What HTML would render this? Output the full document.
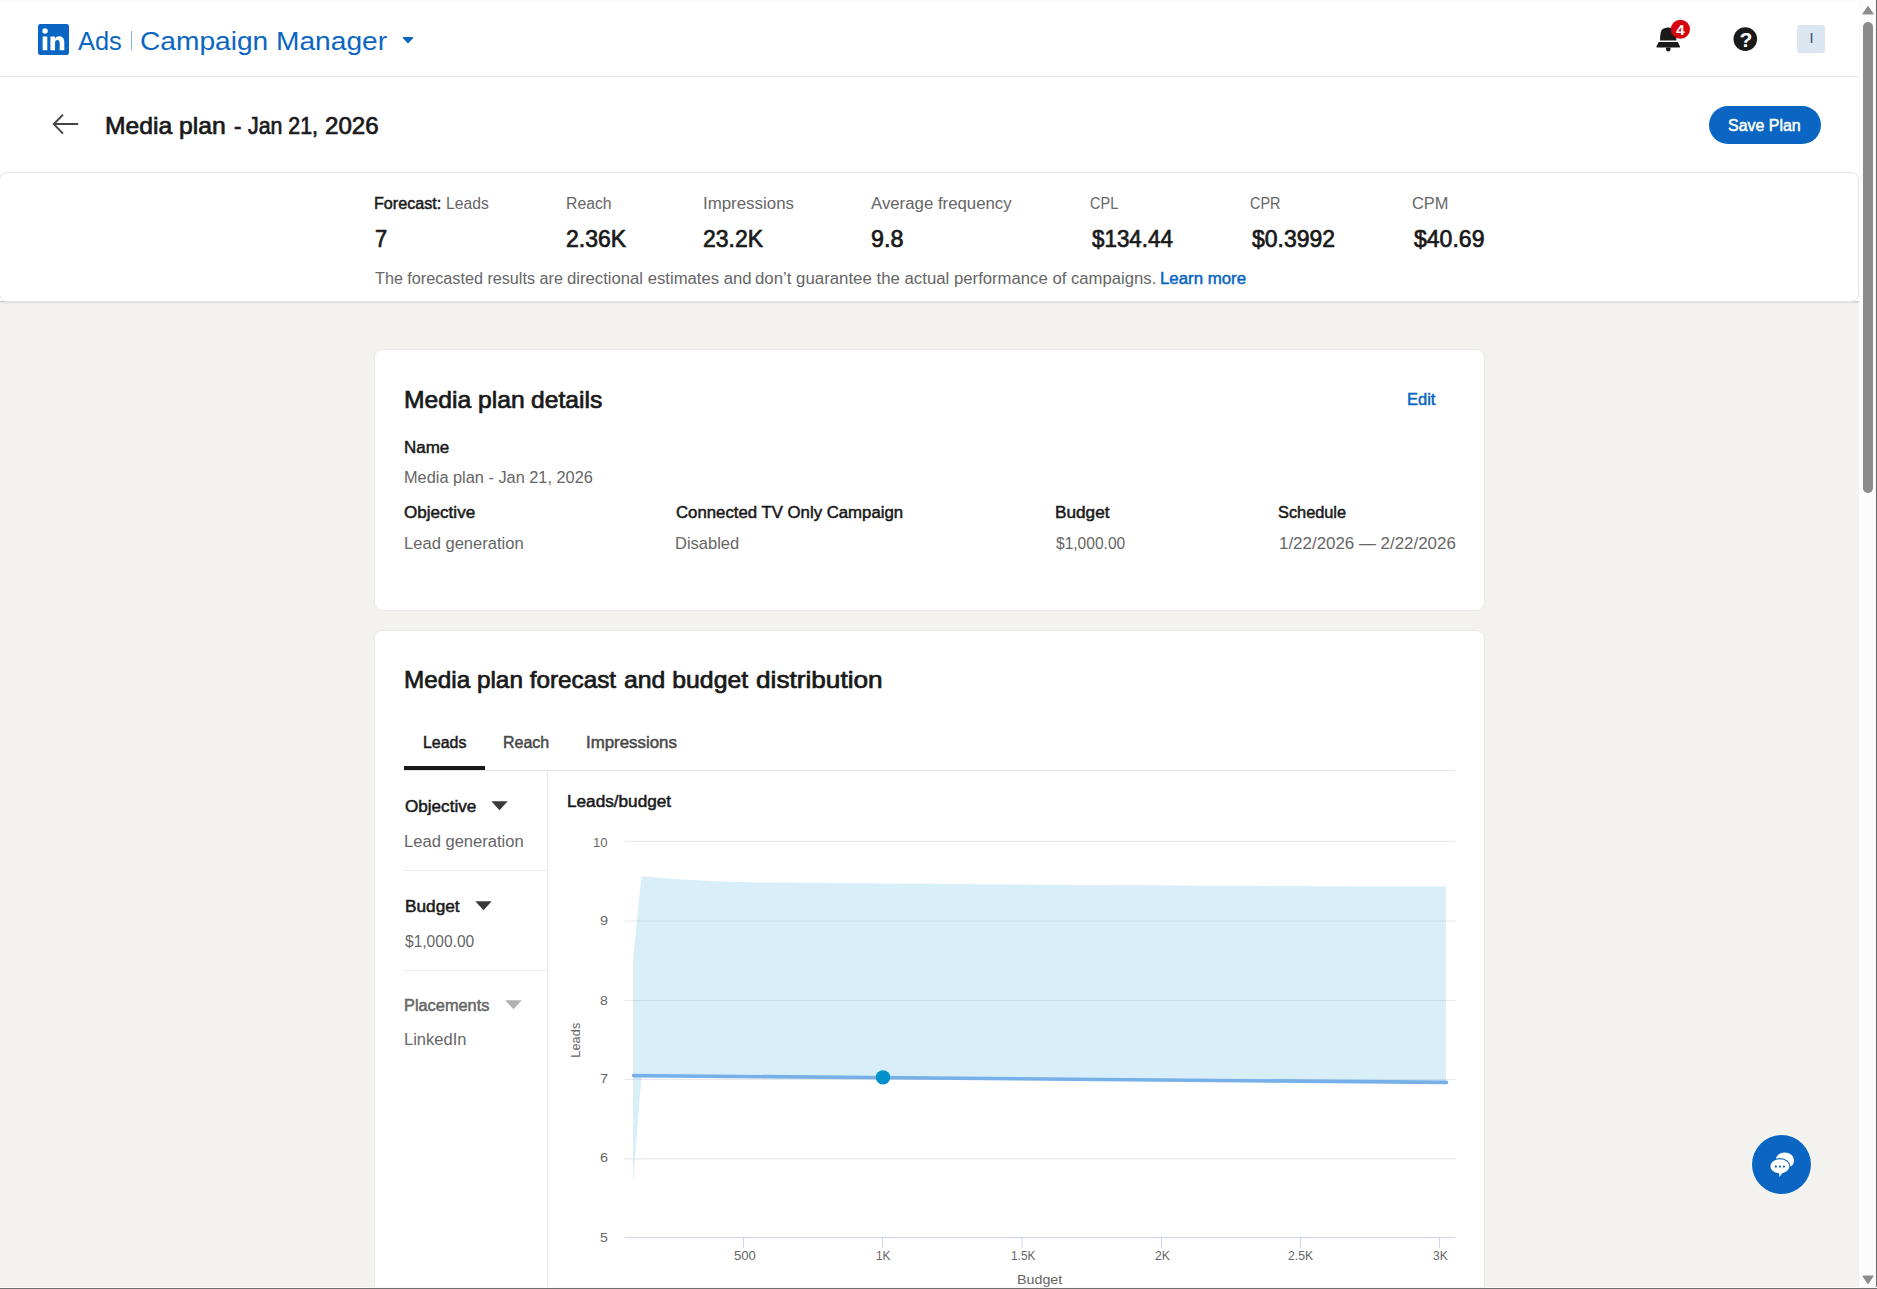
<!DOCTYPE html>
<html lang="en">
<head>
<meta charset="utf-8">
<title>Campaign Manager - Media plan</title>
<style>
html,body{margin:0;padding:0}
body{width:1877px;height:1289px;overflow:hidden;position:relative;background:#f3f2ef;font-family:"Liberation Sans",sans-serif;}
.abs{position:absolute}
.t{position:absolute;display:block;white-space:pre;line-height:1;transform-origin:0 0;margin:0;padding:0;font-weight:400;font-style:normal}
.g{display:contents;margin:0;padding:0;font-size:16px;font-weight:400}
#page{position:absolute;left:0;top:0;width:1859px;height:1289px;overflow:hidden;background:#f3f2ef}
#topnav{position:absolute;left:0;top:0;width:1859px;height:76px;background:#fff;border-bottom:1px solid #e8e8e8}
#titlebar{position:absolute;left:0;top:77px;width:1859px;height:95px;background:#fff}
#forecastwrap{position:absolute;left:0;top:172px;width:1859px;height:129px;background:#fff;border-bottom:1px solid #cfcfcd;box-shadow:0 1px 1px rgba(0,0,0,.07)}
#forecast{position:absolute;left:-1px;top:0;width:1858px;height:128px;background:#fff;border:1px solid #e6e6e6;border-radius:8px}
.card{position:absolute;background:#fff;border-radius:8px;box-shadow:0 0 0 1px rgba(0,0,0,.035)}
#card1{left:375px;top:350px;width:1109px;height:260px}
#card2{left:375px;top:631px;width:1109px;height:700px}
#save{position:absolute;left:1709px;top:106px;width:112px;height:38px;border-radius:19px;background:#0a66c2}
#avatar{position:absolute;left:1797px;top:25px;width:28px;height:28px;border-radius:3px;background:#dce6f1}
#sb{position:absolute;left:1859px;top:0;width:18px;height:1289px;background:#fcfcfc}
#sbthumb{position:absolute;left:4px;top:22px;width:10px;height:471px;border-radius:5px;background:#8b8b8b}
#edgeR{position:absolute;left:1876px;top:0;width:1px;height:1289px;background:#6e6e6e}
#edgeR2{position:absolute;left:1875px;top:0;width:1px;height:1289px;background:#f2f2f2}
#edgeB{position:absolute;left:0;top:1288px;width:1877px;height:1px;background:#6e6e6e}
#edgeB2{position:absolute;left:0;top:1287px;width:1877px;height:1px;background:#fafafa}
.hl{position:absolute;height:1px;background:#ebebeb}
.vl{position:absolute;width:1px;background:#ebebeb}
</style>
</head>
<body>
<div id="page">
  <div class="abs" style="left:0;top:0;width:1859px;height:1px;background:#fff8fb;z-index:5"></div>
  <header id="topnav">
    <svg class="abs" style="left:38px;top:24px" width="31" height="31" viewBox="2 2 20 20"><path fill="#0a66c2" d="M20.5 2h-17A1.5 1.5 0 002 3.500v17A1.5 1.5 0 003.500 22h17a1.5 1.5 0 001.500-1.500v-17A1.5 1.5 0 0020.500 2zM8 19H5v-9h3zM6.500 8.250A1.750 1.750 0 118.300 6.500a1.780 1.780 0 01-1.800 1.750zM19 19h-3v-4.740c0-1.420-.600-1.930-1.380-1.930A1.740 1.740 0 0013 14.190a.660.660 0 000 .140V19h-3v-9h2.900v1.300a3.110 3.110 0 012.700-1.400c1.550 0 3.360.860 3.360 3.660z"/></svg>
    <div class="abs" style="left:130.5px;top:31px;width:1.5px;height:19px;background:#8ab8e6"></div>
    <svg class="abs" style="left:401px;top:35px" width="14" height="10" viewBox="0 0 14 10"><path fill="#0a66c2" stroke="#0a66c2" stroke-width="1.4" stroke-linejoin="round" d="M2.500 2.700h9L7 7.400z"/></svg>
    <!-- bell -->
    <svg class="abs" style="left:1652px;top:18px" width="42" height="38" viewBox="1652 18 42 38">
      <path fill="#1a1a1a" d="M1660 40.600C1660.100 35.500 1660.500 32.200 1661.600 30.300C1662.900 28.200 1665.300 27.400 1668.200 27.400C1671.100 27.400 1673.500 28.200 1674.800 30.300C1675.900 32.200 1676.300 35.500 1676.400 40.600Z"/>
      <path fill="#1a1a1a" d="M1658.800 41.900H1677.800L1679.900 46.200C1680.200 46.900 1679.800 47.500 1679 47.500H1657.400C1656.600 47.500 1656.200 46.900 1656.500 46.200Z"/>
      <path fill="#1a1a1a" d="M1666 47.400H1670.500V49.200A2.250 2.250 0 0 1 1666 49.200Z"/>
      <circle cx="1680.400" cy="29.300" r="9.550" fill="#d6040f"/>
    </svg>
    <!-- help -->
    <svg class="abs" style="left:1733px;top:27px" width="25" height="25" viewBox="0 0 25 25"><circle cx="12.300" cy="12.100" r="11.800" fill="#1a1a1a"/></svg>
    <div id="avatar"></div>
  </header>
  <section id="titlebar">
    <svg class="abs" style="left:50px;top:33px" width="32" height="28" viewBox="0 0 32 28"><path fill="none" stroke="#444" stroke-width="2" d="M28.200 14.100H4.600M13 4.600L3.800 14.100 13 23.600"/></svg>
  </section>
  <div id="save"></div>
  <div id="forecastwrap"><section id="forecast"></section></div>
  <section class="card" id="card1"></section>
  <section class="card" id="card2">
    <div class="hl" style="left:29px;top:139px;width:1051px;background:#e6e6e6"></div>
    <div class="abs" style="left:29px;top:135px;width:81px;height:4px;background:#191919"></div>
    <div class="vl" style="left:172px;top:140px;height:560px"></div>
    <div class="hl" style="left:29px;top:239px;width:143px"></div>
    <div class="hl" style="left:29px;top:339px;width:143px"></div>
  </section>
  <!-- sidebar carets -->
  <svg class="abs" style="left:491px;top:801px" width="17" height="10" viewBox="0 0 17 10"><path fill="#3a3a3a" d="M.3.300h16.400L8.500 9.300z"/></svg>
  <svg class="abs" style="left:475px;top:901px" width="17" height="10" viewBox="0 0 17 10"><path fill="#3a3a3a" d="M.3.300h16.400L8.500 9.300z"/></svg>
  <svg class="abs" style="left:505px;top:1000px" width="17" height="10" viewBox="0 0 17 10"><path fill="#b0b0b0" d="M.3.300h16.400L8.500 9.300z"/></svg>
  <!-- chart -->
  <svg class="abs" style="left:548px;top:771px" width="936" height="518" viewBox="548 771 936 518">
    <g stroke="#e6e6e6" stroke-width="1" fill="none">
      <path d="M624.500 841.400H1455.500M624.500 921H1455.500M624.500 1000.600H1455.500M624.500 1079.400H1455.500M624.500 1158.900H1455.500"/>
    </g>
    <path d="M625 1237.500H1455M743.500 1237.500v10M882.500 1237.500v10M1022 1237.500v10M1161.500 1237.500v10M1300.500 1237.500v10M1439.500 1237.500v10" stroke="#ccd6eb" stroke-width="1" fill="none"/>
    <path fill="#63bfeb" fill-opacity=".25" d="M633 1183V960L641.500 876C680 880 720 882 760 882.500C1000 884.500 1250 886 1446 886.600V1082.400L641.500 1076.500z"/>
    <path d="M633.500 1075.600L1446.500 1082.400" stroke="#77b0e8" stroke-width="3.600" stroke-linecap="round" fill="none"/>
    <circle cx="883" cy="1077.400" r="7.200" fill="#0391ce"/>
    <text transform="translate(579.800 1040.300) rotate(-90)" text-anchor="middle" font-family="Liberation Sans, sans-serif" font-size="12.600" fill="#666666" textLength="35" lengthAdjust="spacing">Leads</text>
  </svg>
  <!-- chat fab -->
  <div class="abs" style="left:1752px;top:1135px;width:59px;height:59px;border-radius:50%;background:#0a66c2;box-shadow:0 0 0 1px rgba(255,255,255,.3)"></div>
  <svg class="abs" style="left:1766px;top:1148px" width="32" height="32" viewBox="1766 1148 32 32">
    <ellipse cx="1784.800" cy="1160.400" rx="9.300" ry="8" fill="#fff"/>
    <ellipse cx="1779.900" cy="1166.600" rx="10.600" ry="8.700" fill="#0a66c2"/>
    <path fill="#fff" d="M1779.900 1159.300c5.200 0 9.400 3 9.400 7 0 3.300-2.900 6-6.900 6.800l-3 4-.3-3.800c-4.900-.3-8.600-3.200-8.600-7 0-4 4.200-7 9.400-7z"/>
    <circle cx="1775.900" cy="1166.600" r="1.150" fill="#0a66c2"/><circle cx="1779.900" cy="1166.600" r="1.150" fill="#0a66c2"/><circle cx="1783.900" cy="1166.600" r="1.150" fill="#0a66c2"/>
  </svg>
<nav class="g" id="g-nav" aria-label="Product navigation">
  <span class="t" style="left:78.40px;top:28px;font-size:26px;color:#0a66c2;transform:scaleX(0.9775);">Ads</span>
  <span class="t" style="left:140.48px;top:28px;font-size:26px;color:#0a66c2;transform:scaleX(1.0819);">Campaign Manager</span>
</nav>
<h1 class="g" id="g-title">
  <span class="t" style="left:104.84px;top:115px;font-size:23.2px;color:#191919;transform:scaleX(1.0647);-webkit-text-stroke:0.7px #191919;">Media plan</span>
  <span class="t" style="left:233.54px;top:115px;font-size:23.2px;color:#191919;transform:scaleX(0.9623);-webkit-text-stroke:0.7px #191919;">-</span>
  <span class="t" style="left:248.39px;top:115px;font-size:23.2px;color:#191919;transform:scaleX(0.9201);-webkit-text-stroke:0.7px #191919;">Jan 21,</span>
  <span class="t" style="left:324.63px;top:115px;font-size:23.2px;color:#191919;transform:scaleX(1.0387);-webkit-text-stroke:0.7px #191919;">2026</span>
</h1>
<section class="g" id="g-actions" aria-label="Page actions">
  <span class="t" style="left:1728.44px;top:118px;font-size:15.8px;color:#ffffff;transform:scaleX(1.0098);-webkit-text-stroke:0.47px #ffffff;">Save Plan</span>
</section>
<section class="g" id="g-forecast" aria-label="Forecast summary">
  <span class="t" style="left:374.08px;top:196px;font-size:15.6px;color:#191919;transform:scaleX(1.0360);-webkit-text-stroke:0.47px #191919;">Forecast:</span>
  <span class="t" style="left:445.77px;top:196px;font-size:15.6px;color:#666666;transform:scaleX(1.0078);">Leads</span>
  <span class="t" style="left:565.67px;top:196px;font-size:15.6px;color:#666666;transform:scaleX(1.0121);">Reach</span>
  <span class="t" style="left:702.68px;top:196px;font-size:15.6px;color:#666666;transform:scaleX(1.0819);">Impressions</span>
  <span class="t" style="left:871.00px;top:196px;font-size:15.6px;color:#666666;transform:scaleX(1.0765);">Average frequency</span>
  <span class="t" style="left:1089.72px;top:196px;font-size:15.6px;color:#666666;transform:scaleX(0.9310);">CPL</span>
  <span class="t" style="left:1249.92px;top:196px;font-size:15.6px;color:#666666;transform:scaleX(0.9257);">CPR</span>
  <span class="t" style="left:1412.13px;top:196px;font-size:15.6px;color:#666666;transform:scaleX(1.0526);">CPM</span>
  <span class="t" style="left:374.91px;top:228px;font-size:23.2px;color:#191919;transform:scaleX(0.9423);-webkit-text-stroke:0.7px #191919;">7</span>
  <span class="t" style="left:566.17px;top:228px;font-size:23.2px;color:#191919;transform:scaleX(0.9890);-webkit-text-stroke:0.7px #191919;">2.36K</span>
  <span class="t" style="left:703.27px;top:228px;font-size:23.2px;color:#191919;transform:scaleX(0.9890);-webkit-text-stroke:0.7px #191919;">23.2K</span>
  <span class="t" style="left:870.96px;top:228px;font-size:23.2px;color:#191919;transform:scaleX(1.0030);-webkit-text-stroke:0.7px #191919;">9.8</span>
  <span class="t" style="left:1091.54px;top:228px;font-size:23.2px;color:#191919;transform:scaleX(0.9650);-webkit-text-stroke:0.7px #191919;">$134.44</span>
  <span class="t" style="left:1251.65px;top:228px;font-size:23.2px;color:#191919;transform:scaleX(0.9895);-webkit-text-stroke:0.7px #191919;">$0.3992</span>
  <span class="t" style="left:1414.15px;top:228px;font-size:23.2px;color:#191919;transform:scaleX(0.9932);-webkit-text-stroke:0.7px #191919;">$40.69</span>
  <span class="t" style="left:375.15px;top:271px;font-size:15.6px;color:#666666;transform:scaleX(1.0373);">The forecasted results are</span>
  <span class="t" style="left:566.78px;top:271px;font-size:15.6px;color:#666666;transform:scaleX(1.0700);">directional estimates and</span>
  <span class="t" style="left:755.47px;top:271px;font-size:15.6px;color:#666666;transform:scaleX(1.0776);">don’t guarantee the actual</span>
  <span class="t" style="left:953.76px;top:271px;font-size:15.6px;color:#666666;transform:scaleX(1.0709);">performance of campaigns.</span>
  <span class="t" style="left:1159.64px;top:271px;font-size:15.6px;color:#0a66c2;transform:scaleX(1.0783);-webkit-text-stroke:0.47px #0a66c2;">Learn more</span>
</section>
<h2 class="g" id="g-details-title">
  <span class="t" style="left:404.04px;top:389px;font-size:23.2px;color:#191919;transform:scaleX(1.0638);-webkit-text-stroke:0.7px #191919;">Media plan</span>
  <span class="t" style="left:531.00px;top:389px;font-size:23.2px;color:#191919;transform:scaleX(1.0622);-webkit-text-stroke:0.7px #191919;">details</span>
</h2>
<section class="g" id="g-details" aria-label="Media plan details">
  <span class="t" style="left:1406.76px;top:392px;font-size:15.6px;color:#0a66c2;transform:scaleX(1.0583);-webkit-text-stroke:0.47px #0a66c2;">Edit</span>
  <span class="t" style="left:403.93px;top:440px;font-size:15.6px;color:#191919;transform:scaleX(1.0867);-webkit-text-stroke:0.47px #191919;">Name</span>
  <span class="t" style="left:403.72px;top:470px;font-size:15.6px;color:#666666;transform:scaleX(1.0473);">Media plan - Jan 21, 2026</span>
  <span class="t" style="left:404.06px;top:505px;font-size:15.6px;color:#191919;transform:scaleX(1.0950);-webkit-text-stroke:0.47px #191919;">Objective</span>
  <span class="t" style="left:403.71px;top:536px;font-size:15.6px;color:#666666;transform:scaleX(1.0621);">Lead generation</span>
  <span class="t" style="left:675.57px;top:505px;font-size:15.6px;color:#191919;transform:scaleX(1.0753);-webkit-text-stroke:0.47px #191919;">Connected TV Only Campaign</span>
  <span class="t" style="left:675.31px;top:536px;font-size:15.6px;color:#666666;transform:scaleX(1.0583);">Disabled</span>
  <span class="t" style="left:1055.02px;top:505px;font-size:15.6px;color:#191919;transform:scaleX(1.1020);-webkit-text-stroke:0.47px #191919;">Budget</span>
  <span class="t" style="left:1056.00px;top:536px;font-size:15.6px;color:#666666;transform:scaleX(0.9973);">$1,000.00</span>
  <span class="t" style="left:1278.24px;top:505px;font-size:15.6px;color:#191919;transform:scaleX(1.0470);-webkit-text-stroke:0.47px #191919;">Schedule</span>
  <span class="t" style="left:1278.84px;top:536px;font-size:15.6px;color:#666666;transform:scaleX(1.0849);">1/22/2026 — 2/22/2026</span>
</section>
<h2 class="g" id="g-dist-title">
  <span class="t" style="left:404.07px;top:669px;font-size:23.2px;color:#191919;transform:scaleX(1.0481);-webkit-text-stroke:0.7px #191919;">Media plan forecast</span>
  <span class="t" style="left:624.20px;top:669px;font-size:23.2px;color:#191919;transform:scaleX(1.0697);-webkit-text-stroke:0.7px #191919;">and budget</span>
  <span class="t" style="left:755.58px;top:669px;font-size:23.2px;color:#191919;transform:scaleX(1.1290);-webkit-text-stroke:0.7px #191919;">distribution</span>
</h2>
<nav class="g" id="g-tabs" aria-label="Forecast metric tabs">
  <span class="t" style="left:422.50px;top:735px;font-size:15.6px;color:#191919;transform:scaleX(1.0206);-webkit-text-stroke:0.47px #191919;">Leads</span>
  <span class="t" style="left:503.19px;top:735px;font-size:15.6px;color:#484848;transform:scaleX(1.0241);-webkit-text-stroke:0.47px #484848;">Reach</span>
  <span class="t" style="left:586.24px;top:735px;font-size:15.6px;color:#484848;transform:scaleX(1.0806);-webkit-text-stroke:0.47px #484848;">Impressions</span>
</nav>
<aside class="g" id="g-filters" aria-label="Forecast filters">
  <span class="t" style="left:404.66px;top:799px;font-size:15.6px;color:#191919;transform:scaleX(1.0966);-webkit-text-stroke:0.47px #191919;">Objective</span>
  <span class="t" style="left:403.71px;top:834px;font-size:15.6px;color:#666666;transform:scaleX(1.0621);">Lead generation</span>
  <span class="t" style="left:404.51px;top:899px;font-size:15.6px;color:#191919;transform:scaleX(1.1041);-webkit-text-stroke:0.47px #191919;">Budget</span>
  <span class="t" style="left:405.00px;top:934px;font-size:15.6px;color:#666666;transform:scaleX(0.9973);">$1,000.00</span>
  <span class="t" style="left:403.97px;top:998px;font-size:15.6px;color:#666666;transform:scaleX(1.0482);-webkit-text-stroke:0.47px #666666;">Placements</span>
  <span class="t" style="left:403.71px;top:1032px;font-size:15.6px;color:#666666;transform:scaleX(1.0587);">LinkedIn</span>
</aside>
<section class="g" id="g-chart" aria-label="Leads per budget chart">
  <span class="t" style="left:566.82px;top:794px;font-size:15.6px;color:#191919;transform:scaleX(1.1011);-webkit-text-stroke:0.47px #191919;">Leads/budget</span>
  <span class="t" style="left:593.08px;top:837px;font-size:12.6px;color:#666666;transform:scaleX(1.0382);">10</span>
  <span class="t" style="left:599.72px;top:915px;font-size:12.6px;color:#666666;transform:scaleX(1.1520);">9</span>
  <span class="t" style="left:599.96px;top:995px;font-size:12.6px;color:#666666;transform:scaleX(1.1148);">8</span>
  <span class="t" style="left:599.72px;top:1073px;font-size:12.6px;color:#666666;transform:scaleX(1.1520);">7</span>
  <span class="t" style="left:599.72px;top:1152px;font-size:12.6px;color:#666666;transform:scaleX(1.1520);">6</span>
  <span class="t" style="left:599.96px;top:1232px;font-size:12.6px;color:#666666;transform:scaleX(1.1148);">5</span>
  <span class="t" style="left:733.79px;top:1250px;font-size:12.6px;color:#666666;transform:scaleX(1.0392);">500</span>
  <span class="t" style="left:876.46px;top:1250px;font-size:12.6px;color:#666666;transform:scaleX(0.9392);">1K</span>
  <span class="t" style="left:1010.56px;top:1250px;font-size:12.6px;color:#666666;transform:scaleX(0.9406);">1.5K</span>
  <span class="t" style="left:1154.53px;top:1250px;font-size:12.6px;color:#666666;transform:scaleX(0.9674);">2K</span>
  <span class="t" style="left:1288.33px;top:1250px;font-size:12.6px;color:#666666;transform:scaleX(0.9730);">2.5K</span>
  <span class="t" style="left:1432.92px;top:1250px;font-size:12.6px;color:#666666;transform:scaleX(0.9546);">3K</span>
  <span class="t" style="left:1016.68px;top:1274px;font-size:12.6px;color:#666666;transform:scaleX(1.1341);">Budget</span>
</section>
  <div class="t" style="left:1676.200px;top:23px;font-size:14px;font-weight:700;color:#fff;transform:scaleX(1.12)">4</div>
  <div class="t" style="left:1739.400px;top:28.600px;font-size:21px;font-weight:700;color:#fff">?</div>
  <div class="t" style="left:1809.600px;top:31px;font-size:14.500px;color:#3a4a5c">I</div>
</div>
<div id="sb">
  <div id="sbthumb"></div>
  <svg class="abs" style="left:3px;top:5px" width="12" height="10" viewBox="0 0 12 10"><path fill="#8b8b8b" stroke="#8b8b8b" stroke-linejoin="round" stroke-width="1.200" d="M1 9L6 1.600 11 9z"/></svg>
  <svg class="abs" style="left:3px;top:1275px" width="12" height="10" viewBox="0 0 12 10"><path fill="#8b8b8b" stroke="#8b8b8b" stroke-linejoin="round" stroke-width="1.200" d="M1 1L6 8.400 11 1z"/></svg>
</div>
<div id="edgeR2"></div><div id="edgeR"></div><div id="edgeB2"></div><div id="edgeB"></div>
</body>
</html>
